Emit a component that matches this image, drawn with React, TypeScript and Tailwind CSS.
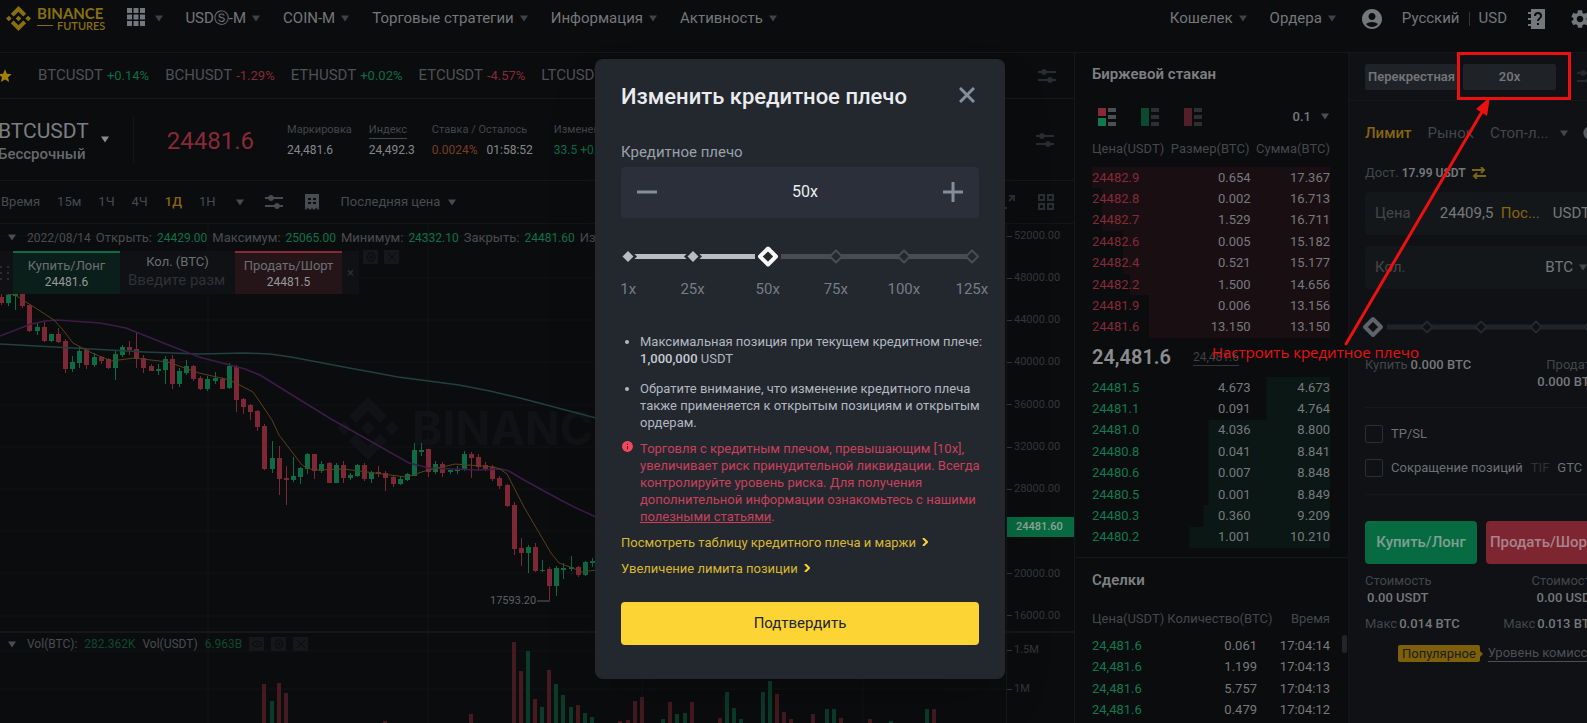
import React, { useState } from 'react';
import { MdAccountCircle, MdInfo, MdSettings, MdStar } from 'react-icons/md';
import { SiBinance } from 'react-icons/si';

// [body top, body bottom, high, low, up]
type Candle = [number, number, number, number, 0 | 1];

const STEP = 7.12;

const candles: Candle[] = [
  [73, 79, 69, 81, 0], [71, 79, 69, 82, 1], [70, 72, 69, 86, 1], [70, 82, 70, 84, 0],
  [81, 107, 81, 108, 0], [103, 107, 99, 111, 1], [103, 117, 98, 118, 0], [110, 117, 110, 118, 1],
  [110, 118, 104, 119, 0], [117, 145, 115, 149, 0], [138, 145, 132, 148, 1], [127, 139, 123, 144, 1],
  [126, 141, 125, 145, 0], [133, 141, 129, 143, 1], [133, 137, 132, 140, 0], [135, 144, 134, 145, 0],
  [130, 144, 127, 156, 1], [123, 131, 121, 133, 1], [123, 126, 117, 131, 0], [125, 135, 108, 144, 0],
  [134, 144, 131, 149, 0], [142, 147, 140, 147, 0], [145, 147, 140, 151, 1], [135, 146, 132, 160, 1],
  [135, 160, 131, 165, 0], [147, 160, 144, 163, 1], [142, 149, 136, 151, 1], [142, 155, 141, 157, 0],
  [154, 165, 152, 166, 0], [155, 165, 152, 167, 1], [154, 157, 148, 160, 1], [155, 165, 153, 165, 0],
  [142, 164, 139, 165, 1], [143, 176, 141, 188, 0], [175, 183, 174, 190, 0], [181, 188, 180, 196, 0],
  [187, 203, 186, 207, 0], [202, 245, 200, 246, 0], [234, 245, 217, 249, 1], [234, 255, 222, 271, 0],
  [254, 256, 242, 281, 0], [252, 256, 233, 258, 1], [244, 253, 243, 260, 1], [230, 245, 229, 250, 1],
  [230, 247, 230, 255, 0], [240, 247, 237, 249, 1], [239, 259, 238, 259, 0], [241, 259, 239, 259, 1],
  [241, 254, 237, 259, 0], [251, 254, 249, 256, 1], [241, 252, 240, 253, 1], [241, 255, 239, 257, 0],
  [248, 255, 247, 259, 1], [248, 250, 242, 253, 0], [249, 254, 247, 267, 0], [253, 260, 251, 263, 0],
  [255, 260, 252, 261, 1], [250, 256, 249, 257, 1], [226, 252, 219, 252, 1], [226, 228, 219, 232, 1],
  [225, 248, 225, 253, 0], [240, 248, 237, 250, 1], [240, 249, 238, 253, 0], [246, 248, 245, 250, 1],
  [245, 247, 242, 250, 1], [230, 246, 227, 247, 1], [230, 234, 228, 254, 0], [233, 243, 230, 246, 0],
  [241, 245, 238, 247, 0], [243, 255, 241, 257, 0], [254, 262, 252, 265, 0], [261, 282, 260, 283, 0],
  [281, 325, 278, 331, 0], [324, 329, 314, 342, 0], [323, 329, 321, 349, 1], [323, 347, 319, 348, 0],
  [346, 347, 336, 348, 1], [345, 362, 343, 376, 0], [344, 362, 342, 372, 1], [344, 346, 339, 355, 1],
  [343, 345, 332, 347, 1], [343, 351, 342, 353, 0], [338, 351, 337, 352, 1], [337, 339, 334, 343, 1],
];

// [candle index, bar top, up]
const volumes: [number, number, 0 | 1][] = [
  [37, 460, 0], [38, 477, 1], [39, 459, 0], [40, 469, 0], [54, 497, 0], [66, 490, 0],
  [72, 418, 0], [73, 447, 0], [74, 427, 1], [75, 475, 0], [76, 483, 1], [77, 446, 0],
  [78, 460, 1], [79, 471, 1], [80, 483, 1], [81, 481, 0], [82, 489, 1], [83, 493, 1],
  [87, 497, 0], [88, 496, 0], [89, 477, 0], [90, 473, 0], [93, 495, 1], [94, 478, 0],
  [95, 490, 1], [96, 489, 1], [97, 478, 0], [101, 494, 0], [102, 468, 1], [103, 484, 1],
  [104, 495, 1], [107, 468, 1], [108, 457, 1], [109, 470, 0], [110, 488, 0], [111, 495, 0],
  [114, 490, 0], [116, 485, 1], [117, 485, 1], [118, 494, 0], [122, 495, 0], [125, 497, 1],
  [130, 485, 1], [131, 485, 0],
];

const maFast = '0,69 15,71 34,83 54,96 63,106 73,119 92,129 111,137 134,134 168,138 199,149 230,156 253,168 264,184 272,196 279,211 302,241 307,244 314,246 344,245 367,248 406,253 425,247 455,240 494,243 500,245 507,250 524,283 551,329 559,339 570,343 582,348 596,346';
const maMid = '0,112 31,100 45,97 57,96 100,99 126,104 161,118 199,133 245,145 260,151 276,161 331,195 356,209 409,239 429,244 478,246 501,245 509,247 524,256 555,273 574,283 596,293';
const maSlow = '0,120 73,124 145,128 199,130 245,129 270,130 291,133 344,143 398,153 459,161 490,167 520,174 596,194';

const tickers = [
  { name: 'BTCUSDT', change: '+0.14%' },
  { name: 'BCHUSDT', change: '-1.29%' },
  { name: 'ETHUSDT', change: '+0.02%' },
  { name: 'ETCUSDT', change: '-4.57%' },
  { name: 'LTCUSDT', change: '-0.61%' },
];

const asks = [
  { price: '24482.9', size: '0.654', sum: '17.367', depth: 100 },
  { price: '24482.8', size: '0.002', sum: '16.713', depth: 96 },
  { price: '24482.7', size: '1.529', sum: '16.711', depth: 96 },
  { price: '24482.6', size: '0.005', sum: '15.182', depth: 87 },
  { price: '24482.4', size: '0.521', sum: '15.177', depth: 87 },
  { price: '24482.2', size: '1.500', sum: '14.656', depth: 84 },
  { price: '24481.9', size: '0.006', sum: '13.156', depth: 76 },
  { price: '24481.6', size: '13.150', sum: '13.150', depth: 76 },
];

const bids = [
  { price: '24481.5', size: '4.673', sum: '4.673', depth: 27 },
  { price: '24481.1', size: '0.091', sum: '4.764', depth: 27 },
  { price: '24481.0', size: '4.036', sum: '8.800', depth: 51 },
  { price: '24480.8', size: '0.041', sum: '8.841', depth: 51 },
  { price: '24480.6', size: '0.007', sum: '8.848', depth: 51 },
  { price: '24480.5', size: '0.001', sum: '8.849', depth: 51 },
  { price: '24480.3', size: '0.360', sum: '9.209', depth: 53 },
  { price: '24480.2', size: '1.001', sum: '10.210', depth: 59 },
];

const trades = [
  { price: '24,481.6', amount: '0.061', time: '17:04:14' },
  { price: '24,481.6', amount: '1.199', time: '17:04:13' },
  { price: '24,481.6', amount: '5.757', time: '17:04:13' },
  { price: '24,481.6', amount: '0.479', time: '17:04:12' },
];

const marks = [
  { label: '1x', at: 2 },
  { label: '25x', at: 20 },
  { label: '50x', at: 41 },
  { label: '75x', at: 60 },
  { label: '100x', at: 79 },
  { label: '125x', at: 98 },
];

const Caret = ({ className = '' }: { className?: string }) => (
  <svg viewBox="0 0 8 7" className={`h-[7px] w-2 shrink-0 fill-current ${className}`}>
    <path d="M0 .5h8L4 6.500z" />
  </svg>
);

const SlidersIcon = () => (
  <svg viewBox="0 0 18 16" className="h-4 w-[18px] shrink-0 fill-current">
    <path d="M0 3h3.200a3 3 0 0 1 5.600 0H18v2H8.800a3 3 0 0 1-5.600 0H0zM0 11h9.200a3 3 0 0 1 5.600 0H18v2h-3.200a3 3 0 0 1-5.600 0H0z" />
  </svg>
);

const BookIcon = ({ top, bottom, rest }: { top: string; bottom: string; rest: string }) => (
  <svg viewBox="0 0 18 18" className="h-[18px] w-[18px]">
    <path d="M0 0h8v8H0z" fill={top} />
    <path d={top === bottom ? 'M0 8h8v10H0z' : 'M0 10h8v8H0z'} fill={bottom} />
    <path d="M10 0h8v4h-8zM10 7h8v4h-8zM10 14h8v4h-8z" fill={rest} />
  </svg>
);

const MiniButton = ({ kind }: { kind: 'eye' | 'gear' | 'close' }) => (
  <button aria-label={kind} className="flex h-[14px] w-[15px] items-center justify-center bg-[#15171a]">
    <svg viewBox="0 0 10 10" className="h-[10px] w-[10px] fill-none stroke-[#090a0c]">
      {kind === 'eye' && <path d="M0 5q5-6 10 0q-5 6-10 0zM4 5h2" />}
      {kind === 'gear' && <path d="M3 1h4l2 4-2 4H3L1 5zM4 4h2v2H4z" />}
      {kind === 'close' && <path d="M1 1l8 8M9 1l-8 8" />}
    </svg>
  </button>
);

const Header = () => (
  <header className="flex h-[53px] shrink-0 items-start justify-between border-b border-[#15171a] text-[15px] text-[#74777b]">
    <nav className="flex h-[37px] items-center">
      <a href="#" aria-label="Binance Futures" className="mr-5 ml-[6px] flex items-center gap-[6px] text-[#88700f]">
        <SiBinance className="h-[25px] w-[25px]" />
        <span className="flex flex-col font-[Lato]">
          <span className="text-[15px] leading-[13px] font-bold">BINANCE</span>
          <span className="flex items-center gap-1 text-[11px] leading-[11px] font-semibold">
            <span className="h-px w-4 bg-[#88700f]" />
            FUTURES
          </span>
        </span>
      </a>
      <button aria-label="Меню" className="mr-[22px] ml-[2px] flex items-center gap-[10px]">
        <svg viewBox="0 0 18 18" className="mb-[3px] h-[18px] w-[18px] fill-current">
          <path d="M0 0h5v5H0zM6.500 0h5v5h-5zM13 0h5v5h-5zM0 6.500h5v5H0zM6.500 6.500h5v5h-5zM13 6.500h5v5h-5zM0 13h5v5H0zM6.500 13h5v5h-5zM13 13h5v5h-5z" />
        </svg>
        <Caret className="text-[#3f4347]" />
      </button>
      <div className="flex items-center gap-[23px]">
        {['USDⓈ-M', 'COIN-M', 'Торговые стратегии', 'Информация', 'Активность'].map((item) => (
          <a key={item} href="#" className="flex items-center gap-[6px] whitespace-nowrap">
            {item}
            <Caret className="text-[#3f4347]" />
          </a>
        ))}
      </div>
    </nav>
    <div className="-mr-1 flex h-[37px] items-center">
      <a href="#" className="mr-[23px] flex items-center gap-[6px]">Кошелек<Caret className="text-[#3f4347]" /></a>
      <a href="#" className="mr-6 flex items-center gap-[6px]">Ордера<Caret className="text-[#3f4347]" /></a>
      <MdAccountCircle className="mr-[18px] h-6 w-6" />
      <a href="#">Русский</a>
      <span className="mx-[9px] h-[14px] w-px bg-[#33363a]" />
      <a href="#">USD</a>
      <svg viewBox="0 0 17 20" className="mr-6 ml-[21px] h-5 w-[17px]">
        <path d="M3 0h14v20H3v-3H0v-2h3v-4H0V9h3V5H0V3h3z" fill="#74777b" />
        <path d="M7 7q0-3 3-3t3 3q0 1.500-1.500 2.500T10 12M10 14v2" fill="none" stroke="#0b0c0e" strokeWidth="2" />
      </svg>
      <MdSettings className="h-[22px] w-[22px]" />
    </div>
  </header>
);

const Chart = () => (
  <svg viewBox="0 0 1007 499" preserveAspectRatio="xMinYMin slice" className="h-full w-full">
    {[12, 54, 96, 138, 181, 223, 265, 307, 349, 392, 427, 465].map((y) => (
      <line key={y} x1="0" x2="1007" y1={y} y2={y} stroke="#101215" />
    ))}
    {[208, 428, 642, 863].map((x) => (
      <line key={x} x1={x} x2={x} y1="0" y2="499" stroke="#111316" />
    ))}
    <line x1="0" x2="1007" y1="408" y2="408" stroke="#15171a" strokeWidth="2" />
    <g fill="#111215">
      <path d="M368 173l19 19-7 7-12-12-12 12-7-7zM368 236l19-19-7-7-12 12-12-12-7 7zM368 197l7 7-7 7-7-7zM344 197l7 7-7 7-7-7zM392 197l7 7-7 7-7-7z" />
      <text x="412" y="221" fontSize="46" fontWeight="700" fontFamily="Inter, sans-serif">BINANCE</text>
    </g>
    {volumes.map(([i, top, up]) => (
      <rect key={i} x={Math.round(i * STEP) - 1} y={top} width="4" height={499 - top} fill={up ? '#0c3b29' : '#451a21'} />
    ))}
    {candles.map(([top, bottom, high, low, up], i) => {
      const x = Math.round(i * STEP) - 1;
      const color = up ? '#0d6b45' : '#7e2836';
      return (
        <g key={i} fill={color}>
          <rect x={x + 2} y={high} width="1" height={low - high} />
          <rect x={x} y={top} width="5" height={bottom - top} />
        </g>
      );
    })}
    <g fill="none">
      <polyline points={maSlow} stroke="#21413f" strokeWidth="1.500" />
      <polyline points={maMid} stroke="#3d1c48" strokeWidth="1.500" />
      <polyline points={maFast} stroke="#59421c" />
    </g>
    <text x="490" y="380" fontSize="11" fill="#5d6064">17593.20</text>
    <line x1="537" x2="550" y1="377" y2="377" stroke="#5d6064" />
  </svg>
);

const Legend = () => (
  <div className="absolute top-0 left-0 flex h-[27px] items-center gap-[5px] pl-2 text-[13px] whitespace-nowrap text-[#494c50]">
    <Caret className="mr-[6px]" />
    <span className="text-xs">2022/08/14</span>
    <span>Открыть:</span><span className="text-xs text-[#0e7249]">24429.00</span>
    <span>Максимум:</span><span className="text-xs text-[#0e7249]">25065.00</span>
    <span>Минимум:</span><span className="text-xs text-[#0e7249]">24332.10</span>
    <span>Закрыть:</span><span className="text-xs text-[#0e7249]">24481.60</span>
    <span>Изменение:</span>
  </div>
);

const QuickOrder = () => (
  <div className="absolute top-[27px] left-0 flex h-[43px] items-stretch bg-[#0f1114] text-center text-[13px] text-[#6c6f73]">
    <span className="grid w-[13px] grid-cols-2 content-center gap-1 pr-1">
      {[0, 1, 2, 3, 4, 5].map((n) => <i key={n} className="h-[2px] w-[2px] bg-[#2a2d31]" />)}
    </span>
    <button className="w-[107px] border-t-2 border-[#0d6b45] bg-[#0b1f1a] leading-[17px]">
      Купить/Лонг
      <span className="block text-xs leading-[17px] text-[#96999c]">24481.6</span>
    </button>
    <label className="w-[115px] px-2 pt-[3px] leading-4">
      Кол. (BTC)
      <input placeholder="Введите разм" className="block w-full bg-transparent text-[15px] leading-5 outline-none placeholder:text-[#2f3237]" />
    </label>
    <button className="w-[107px] border-t-2 border-[#862a38] bg-[#251519] leading-[17px]">
      Продать/Шорт
      <span className="block text-xs leading-[17px] text-[#96999c]">24481.5</span>
    </button>
    <button aria-label="Закрыть" className="w-[17px] text-[#2f3237]">×</button>
  </div>
);

const PriceAxis = () => (
  <div className="relative w-[68px] shrink-0 overflow-hidden border-l border-[#15171a] text-[11px] text-[#34373b]">
    <ul className="flex h-[400px] flex-col justify-between pt-1">
      {['52000.00', '48000.00', '44000.00', '40000.00', '36000.00', '32000.00', '28000.00', '24000.00', '20000.00', '16000.00'].map((p) => (
        <li key={p} className="flex h-4 items-center gap-[2px]"><i className="h-px w-[5px] bg-[#34373b]" />{p}</li>
      ))}
    </ul>
    <ul className="mt-[7px] flex flex-col gap-[23px] border-t-2 border-[#15171a] pt-[9px]">
      {['1.5M', '1M'].map((p) => (
        <li key={p} className="flex h-4 items-center gap-[2px]"><i className="h-px w-[5px] bg-[#34373b]" />{p}</li>
      ))}
    </ul>
    <span className="absolute top-[293px] left-0 flex h-[20px] w-full items-center bg-[#076b41] pl-[9px] text-[11px] font-medium text-[#8fa399]">24481.60</span>
  </div>
);

const MarketPanel = () => (
  <section className="flex min-w-0 flex-1 flex-col">
    <div className="flex h-[46px] shrink-0 items-center border-b border-[#15171a]">
      <MdStar className="mr-[25px] -ml-[3px] h-4 w-4 shrink-0 text-[#a5810c]" />
      <div className="flex min-w-0 flex-1 gap-4 overflow-hidden">
        {tickers.map((t) => (
          <a key={t.name} href="#" className="flex shrink-0 items-baseline gap-1 text-[15px] text-[#4e5155]">
            {t.name}
            <span className={t.change.startsWith('+') ? 'text-[13px] text-[#0d6b45]' : 'text-[13px] text-[#862a38]'}>{t.change}</span>
          </a>
        ))}
      </div>
      <button aria-label="Настройки" className="mr-[18px] text-[#292c30]"><SlidersIcon /></button>
    </div>

    <div className="flex h-[82px] shrink-0 items-center border-b border-[#15171a]">
      <div className="-ml-[2px] pt-[5px] leading-6 text-[#7b7e82]">
        <h1 className="text-[21px]">BTCUSDT</h1>
        <p className="text-[15px] leading-[22px] font-medium text-[#66696d]">Бессрочный</p>
      </div>
      <Caret className="ml-3 text-[#8a8d90]" />
      <span className="ml-[24px] h-[47px] w-px bg-[#121417]" />
      <span className="ml-[33px] pt-[3px] text-[24px] text-[#862a38]">24481.6</span>
      <dl className="ml-[33px] flex min-w-0 flex-1 gap-[17px] overflow-hidden pt-px text-xs leading-5 whitespace-nowrap text-[#85888b]">
        <div><dt className="text-[11px] leading-5 text-[#43464a]">Маркировка</dt><dd>24,481.6</dd></div>
        <div><dt className="text-[11px] leading-5 text-[#43464a]"><span className="border-b border-[#43464a] pb-[2px]">Индекс</span></dt><dd>24,492.3</dd></div>
        <div className="mr-1">
          <dt className="text-[11px] leading-5 text-[#43464a]">Ставка / Осталось</dt>
          <dd className="flex gap-[9px]"><span className="text-[#7a3d22]">0.0024%</span>01:58:52</dd>
        </div>
        <div><dt className="text-[11px] leading-5 text-[#43464a]">Изменение 24ч</dt><dd className="text-[#0d6b45]">33.5 +0.14%</dd></div>
      </dl>
      <button aria-label="Настройки" className="mr-5 text-[#292c30]"><SlidersIcon /></button>
    </div>

    <div className="flex h-[42px] shrink-0 items-center text-[13px] text-[#484b50]">
      <div className="flex gap-[17px] pl-px">
        {['Время', '15м', '1Ч', '4Ч', '1Д', '1Н'].map((item) => (
          <button key={item} className={item === '1Д' ? 'font-medium text-[#8a650e]' : ''}>{item}</button>
        ))}
      </div>
      <Caret className="mr-[21px] ml-5" />
      <SlidersIcon />
      <svg viewBox="0 0 14 16" className="mx-[22px] h-4 w-[14px]">
        <path d="M0 0h14v16l-3-2-2 2-2-2-2 2-2-2-3 2z" fill="#484b50" />
        <path d="M3 5h3M8 5h3M3 9h3M8 9h3" stroke="#0b0c0e" strokeWidth="2" />
      </svg>
      <button className="flex items-center gap-2">Последняя цена<Caret /></button>
      <span className="flex-1" />
      <svg viewBox="0 0 16 16" className="mr-[22px] h-4 w-4 fill-none stroke-[#2b2e32] stroke-2">
        <path d="M9 2h5v5M14 2L9 7M7 14H2V9" />
      </svg>
      <svg viewBox="0 0 16 16" className="mr-5 h-4 w-4 fill-none stroke-[#2b2e32] stroke-2">
        <path d="M1 1h5v5H1zM10 1h5v5h-5zM1 10h5v5H1zM10 10h5v5h-5z" />
      </svg>
    </div>

    <div className="flex min-h-0 flex-1 border-t border-[#121417]">
      <div className="relative min-w-0 flex-1 overflow-hidden">
        <Chart />
        <Legend />
        <QuickOrder />
        <div className="absolute top-[26px] left-[363px] flex gap-[6px]">
          <MiniButton kind="gear" />
          <MiniButton kind="close" />
        </div>
        <div className="absolute top-[410px] left-0 flex h-5 items-center gap-[7px] pl-2 text-xs text-[#494c50]">
          <Caret className="mr-1" />
          <span>Vol(BTC):</span><span className="text-[#0b4a31]">282.362K</span>
          <span>Vol(USDT)</span><span className="text-[#0b4a31]">6.963B</span>
          <MiniButton kind="eye" />
          <MiniButton kind="gear" />
          <MiniButton kind="close" />
        </div>
      </div>
      <PriceAxis />
    </div>
  </section>
);

const BookRows = ({ rows, side }: { rows: typeof asks; side: 'ask' | 'bid' }) => {
  const shade = side === 'ask' ? '#190f12' : '#0a1714';
  return (
    <tbody>
      {rows.map((row) => (
        <tr key={row.price} style={{ backgroundImage: `linear-gradient(to left, ${shade} ${row.depth}%, transparent ${row.depth}%)` }}>
          <td className={side === 'ask' ? 'text-[#862a38]' : 'text-[#0f7a4e]'}>{row.price}</td>
          <td className="text-right">{row.size}</td>
          <td className="text-right">{row.sum}</td>
        </tr>
      ))}
    </tbody>
  );
};

const OrderBook = () => (
  <section className="relative flex w-[274px] shrink-0 flex-col border-l border-[#15171a] text-xs text-[#77797d]">
    <div className="pr-[18px] pl-[17px]">
      <h2 className="flex h-11 items-center text-[15px] font-semibold text-[#7d8083]">Биржевой стакан</h2>
      <div className="mt-[2px] flex h-9 items-center gap-[25px] pl-[6px]">
        <BookIcon top="#862a38" bottom="#0d7a4c" rest="#4c5055" />
        <BookIcon top="#0b4a31" bottom="#0b4a31" rest="#2c2f33" />
        <BookIcon top="#53202a" bottom="#53202a" rest="#2c2f33" />
        <button className="mr-px ml-auto flex items-center gap-[10px] text-[13px] font-medium">0.1<Caret className="text-[#4b4e52]" /></button>
      </div>
      <div className="mb-1 flex h-7 items-center justify-between text-[13px] text-[#45484c]">
        <span>Цена(USDT)</span><span>Размер(BTC)</span><span>Сумма(BTC)</span>
      </div>
      <table className="h-[171px] w-full table-fixed text-[13px] leading-4">
        <colgroup><col className="w-1/3" /><col className="w-1/3" /><col className="w-1/3" /></colgroup>
        <BookRows rows={asks} side="ask" />
      </table>
      <div className="flex h-[39px] items-center gap-[22px]">
        <span className="text-[20px] font-semibold text-[#8b8d90]">24,481.6</span>
        <span className="border-b border-[#33363a] text-xs text-[#3f4246]">24,481.6</span>
      </div>
      <table className="h-[171px] w-full table-fixed text-[13px] leading-4">
        <colgroup><col className="w-1/3" /><col className="w-1/3" /><col className="w-1/3" /></colgroup>
        <BookRows rows={bids} side="bid" />
      </table>
    </div>
    <div className="mt-[9px] border-t border-[#15171a] pr-[18px] pl-[17px]">
      <h2 className="flex h-[46px] items-center text-[15px] font-semibold text-[#7d8083]">Сделки</h2>
      <div className="flex h-[30px] items-center text-[13px] text-[#45484c]">
        <span>Цена(USDT)</span><span className="ml-[3px]">Количество(BTC)</span><span className="ml-auto">Время</span>
      </div>
      <table className="mt-px h-[86px] w-full table-fixed text-[13px] leading-4">
        <colgroup><col className="w-1/3" /><col className="w-[36%]" /><col /></colgroup>
        <tbody>
          {trades.map((t, i) => (
            <tr key={i}>
              <td className="text-[#0f7a4e]">{t.price}</td>
              <td className="text-right">{t.amount}</td>
              <td className="text-right">{t.time}</td>
            </tr>
          ))}
        </tbody>
      </table>
    </div>
    <span className="absolute right-px bottom-[70px] h-[18px] w-[5px] rounded-full bg-[#222529]" />
  </section>
);

const SizeSlider = () => (
  <div className="relative my-[18px] h-[22px]">
    <svg viewBox="0 0 233 22" className="h-full w-full overflow-visible">
      <path d="M22 11h211" stroke="#202327" strokeWidth="5" />
      {[62, 116, 171, 225].map((x) => (
        <path key={x} d={`M${x} 5.500l5.500 5.500-5.500 5.500-5.500-5.500z`} fill="#0f1114" stroke="#25282c" strokeWidth="2" strokeLinejoin="round" />
      ))}
      <path d="M8 3l8 8-8 8-8-8z" fill="#0f1114" stroke="#606367" strokeWidth="4" strokeLinejoin="round" />
    </svg>
    <input type="range" aria-label="Размер" defaultValue={0} className="absolute inset-0 w-full opacity-0" />
  </div>
);

const OrderForm = () => (
  <section className="w-[239px] shrink-0 overflow-hidden border-l border-[#131518] bg-[#0f1114] text-[13px] text-[#43464a]">
    <div className="flex h-12 w-[265px] items-center gap-[5px] border-b border-[#15171a] pl-4">
      <button className="h-[26px] w-[93px] rounded-xs bg-[#1f2226] text-[13px] font-semibold text-[#727578]">Перекрестная</button>
      <button className="h-[26px] w-[93px] rounded-xs bg-[#1f2226] text-[13px] font-semibold text-[#727578]">20x</button>
      <span className="ml-4 text-[#25282c]"><SlidersIcon /></span>
    </div>
    <div className="w-[249px] pl-4">
      <div className="mt-[18px] flex h-7 items-center text-[15px]">
        <button className="font-medium text-[#8a650e]">Лимит</button>
        <button className="ml-[16px]">Рынок</button>
        <button className="ml-[16px]">Стоп-л...</button>
        <Caret className="ml-3" />
        <MdInfo className="ml-auto h-4 w-4 shrink-0 text-[#55585c]" />
      </div>
      <div className="mt-[14px] flex h-6 items-center">
        Дост.
        <span className="ml-[3px] text-xs font-semibold text-[#75787b]">17.99 USDT</span>
        <svg viewBox="0 0 14 12" className="ml-[6px] h-3 w-[14px] fill-none stroke-[#7d6410] stroke-2">
          <path d="M0 3h12M9 0l3 3-3 3M14 9H2M5 6L2 9l3 3" />
        </svg>
        <span className="ml-auto">⇅</span>
      </div>
      <label className="mt-[7px] flex h-[43px] items-center rounded bg-[#141719] pr-2 pl-[10px] text-[15px]">
        Цена
        <input defaultValue="24409,5" className="ml-auto w-[56px] bg-transparent text-[#75787b] outline-none" />
        <span className="ml-[5px] text-[#8a650e]">Пос...</span>
        <span className="ml-[13px] text-[#75787b]">USDT</span>
      </label>
      <label className="mt-[11px] flex h-[43px] items-center rounded bg-[#141719] pr-[11px] pl-[10px] text-[15px]">
        Кол.
        <input className="min-w-0 flex-1 bg-transparent outline-none" />
        <span className="mr-[6px] text-[#75787b]">BTC</span>
        <Caret />
      </label>
      <div className="pt-[9px]"><SizeSlider /></div>
      <div className="mt-[2px] flex justify-between leading-[17px]">
        <p>Купить<span className="ml-[3px] font-medium text-[#75787b]">0.000 BTC</span></p>
        <p className="text-right">Продать<span className="block font-medium text-[#75787b]">0.000 BTC</span></p>
      </div>
      <div className="mt-[17px] border-y border-[#16181b] py-[17px] text-[#6d7074]">
        <label className="flex h-[18px] items-center gap-2">
          <input type="checkbox" className="h-[18px] w-[18px] appearance-none rounded-xs border border-[#2b2e32]" />
          TP/SL
        </label>
        <div className="mt-4 flex h-[18px] items-center whitespace-nowrap">
          <label className="flex items-center gap-2">
            <input type="checkbox" className="h-[18px] w-[18px] appearance-none rounded-xs border border-[#2b2e32]" />
            Сокращение позиций
          </label>
          <span className="ml-[8px] text-[#2f3236]">TIF</span>
          <span className="ml-2">GTC</span>
        </div>
      </div>
      <div className="mt-[26px] flex gap-[9px] text-[15px] font-medium text-[#7f9f92]">
        <button className="h-[43px] w-28 rounded bg-[#076b41]">Купить/Лонг</button>
        <button className="h-[43px] w-28 rounded bg-[#7e2532] text-[#a9838a]">Продать/Шорт</button>
      </div>
      <div className="mt-2 flex justify-between leading-[17px]">
        <p>Стоимость<span className="ml-[2px] block font-medium text-[#75787b]">0.00 USDT</span></p>
        <p className="text-right">Стоимость<span className="block font-medium text-[#75787b]">0.00 USDT</span></p>
      </div>
      <div className="mt-[9px] flex justify-between leading-[17px]">
        <p>Макс<span className="ml-[2px] font-medium text-[#75787b]">0.014 BTC</span></p>
        <p>Макс<span className="ml-[2px] font-medium text-[#75787b]">0.013 BTC</span></p>
      </div>
      <div className="mt-[13px] ml-[33px] flex items-center whitespace-nowrap">
        <span className="rounded-xs bg-[#7d6009] px-1 leading-[17px] text-[#1c1d1c]">Популярное</span>
        <i className="mr-[5px] h-0 w-0 border-y-3 border-l-3 border-y-transparent border-l-[#7d6009]" />
        <a href="#" className="border-b border-[#4c4f53] leading-4 text-[#4c4f53]">Уровень комиссии</a>
      </div>
    </div>
  </section>
);

const LeverageSlider = ({ active, onPick }: { active: number; onPick: (i: number) => void }) => (
  <div className="relative mt-[26px] h-[58px]">
    <div className="absolute top-[10px] right-[7px] left-[7px] h-[5px] bg-[#474d57]" />
    <div className="absolute top-[10px] left-[7px] h-[5px] bg-[#b7bdc6]" style={{ width: `${marks[active].at - 2}%` }} />
    {marks.map((m, i) => (
      <React.Fragment key={m.label}>
        <svg viewBox="0 0 26 24" className="absolute top-0 h-6 w-[26px] -translate-x-1/2" style={{ left: `${m.at}%` }}>
          {i < active && <path d="M13 4l9 8.500-9 8.500-9-8.500z" fill="#23272e" />}
          {i < active && <path d="M13 7l5.500 5.500-5.500 5.500-5.500-5.500z" fill="#b7bdc6" />}
          {i === active && <path d="M0 9h26v7H0z" fill="#23272e" />}
          {i === active && <path d="M13 4.500l8 8-8 8-8-8z" fill="#23272e" stroke="#fafafa" strokeWidth="4" strokeLinejoin="round" />}
          {i > active && <path d="M13 6.500l6 6-6 6-6-6z" fill="#23272e" stroke="#474d57" strokeWidth="2" strokeLinejoin="round" />}
        </svg>
        <span className="absolute top-[33px] -translate-x-1/2 text-[15px] leading-6 text-[#767d88]" style={{ left: `${m.at}%` }}>{m.label}</span>
      </React.Fragment>
    ))}
    <input
      type="range"
      aria-label="Кредитное плечо"
      min={0}
      max={5}
      value={active}
      onChange={(e) => onPick(Number(e.target.value))}
      className="absolute inset-x-0 top-0 h-6 w-full opacity-0"
    />
  </div>
);

const LeverageModal = () => {
  const [active, setActive] = useState(2);

  return (
    <div role="dialog" aria-labelledby="leverage-title" className="w-[410px] rounded-lg bg-[#23272e] px-[26px] pt-[23px] pb-[34px] text-[13px] leading-[17px] text-[#b2b8c1] shadow-2xl">
      <div className="flex h-[30px] items-center justify-between">
        <h2 id="leverage-title" className="text-[22px] font-medium text-[#eaecef]">Изменить кредитное плечо</h2>
        <button aria-label="Закрыть" className="mr-1 mb-1">
          <svg viewBox="0 0 16 16" className="h-4 w-4 stroke-[#848e9c] stroke-3"><path d="M1 1l14 14M15 1L1 15" /></svg>
        </button>
      </div>
      <label htmlFor="leverage" className="mt-[30px] block text-[15px] leading-5 text-[#9aa1ab]">Кредитное плечо</label>
      <div className="mt-[5px] flex h-[51px] items-center justify-between rounded bg-[#2b2f39] px-4">
        <button aria-label="Уменьшить" onClick={() => setActive(Math.max(0, active - 1))}>
          <svg viewBox="0 0 20 20" className="h-5 w-5 stroke-[#848e9c] stroke-3"><path d="M0 10h20" /></svg>
        </button>
        <input id="leverage" readOnly value={marks[active].label} className="ml-[10px] w-20 bg-transparent text-center text-base text-[#eaecef] outline-none" />
        <button aria-label="Увеличить" onClick={() => setActive(Math.min(5, active + 1))}>
          <svg viewBox="0 0 20 20" className="h-5 w-5 stroke-[#848e9c] stroke-3"><path d="M0 10h20M10 0v20" /></svg>
        </button>
      </div>
      <LeverageSlider active={active} onPick={setActive} />
      <ul className="-mr-2 mt-[31px] flex list-disc flex-col gap-[13px] pl-[19px]">
        <li>Максимальная позиция при текущем кредитном плече: <b className="font-medium text-[#c6cbd3]">1,000,000</b> USDT</li>
        <li>Обратите внимание, что изменение кредитного плеча также применяется к открытым позициям и открытым ордерам.</li>
      </ul>
      <div className="-mr-2 mt-[9px] flex gap-[6px] text-[#c9415a]">
        <MdInfo className="h-[13px] w-[13px] shrink-0 text-[#f6465d]" />
        <p>
          Торговля с кредитным плечом, превышающим [10x], увеличивает риск принудительной ликвидации. Всегда
          контролируйте уровень риска. Для получения дополнительной информации ознакомьтесь с нашими{' '}
          <a href="#" className="underline">полезными статьями</a>.
        </p>
      </div>
      <div className="mt-[9px] flex flex-col items-start gap-[9px] text-[#d9b92f]">
        {['Посмотреть таблицу кредитного плеча и маржи', 'Увеличение лимита позиции'].map((text) => (
          <a key={text} href="#" className="flex items-center gap-[6px]">
            {text}
            <svg viewBox="0 0 6 8" className="h-2 w-[6px] fill-none stroke-[#fcd535] stroke-2"><path d="M1 0l4 4-4 4" /></svg>
          </a>
        ))}
      </div>
      <button className="mt-[25px] h-[43px] w-full rounded bg-[#fcd535] text-[15px] text-[#202630]">Подтвердить</button>
    </div>
  );
};

const Hint = () => (
  <div className="pointer-events-none absolute top-0 right-0 text-[#ec1010]">
    <svg viewBox="0 0 260 360" className="h-[360px] w-[260px] fill-none stroke-current stroke-3">
      <rect x="131.500" y="53.500" width="111" height="45" />
      <path d="M19 344L156 110" strokeLinecap="round" />
      <path d="M163 97l-14 12 11 7z" fill="currentColor" stroke="none" />
    </svg>
    <span className="absolute top-[342px] right-[168px] font-['Open_Sans'] text-[15px] leading-5 whitespace-nowrap">Настроить кредитное плечо</span>
  </div>
);

export default function App() {
  return (
    <div className="relative flex h-screen flex-col overflow-hidden bg-[#0b0c0e] font-[Roboto,sans-serif]">
      <Header />
      <main className="flex min-h-0 flex-1">
        <MarketPanel />
        <OrderBook />
        <OrderForm />
      </main>
      <div className="absolute inset-0 flex items-center justify-center pt-[14px] pl-[13px]">
        <LeverageModal />
      </div>
      <Hint />
    </div>
  );
}
